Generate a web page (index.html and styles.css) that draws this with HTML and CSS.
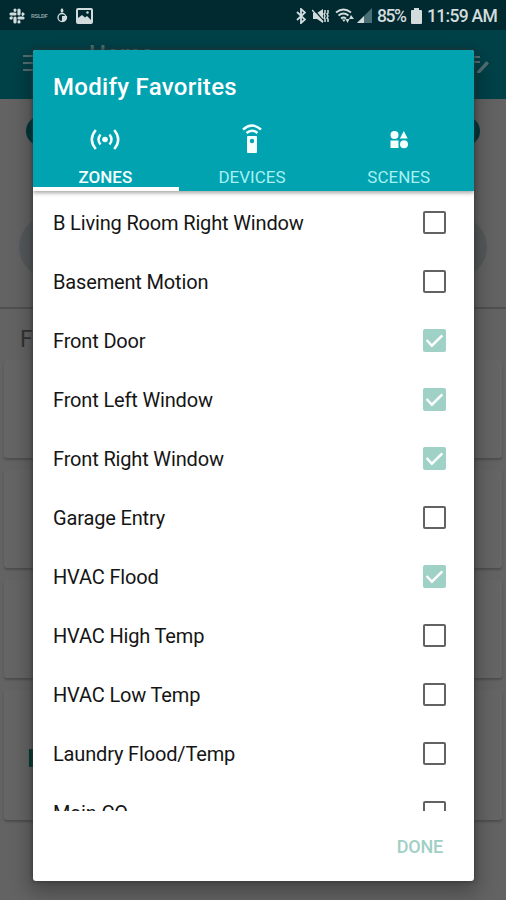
FILE: index.html
```html
<!DOCTYPE html>
<html lang="en">
<head>
<meta charset="utf-8">
<title>Modify Favorites</title>
<link rel="stylesheet" href="styles.css">
</head>
<body>
<div class="screen">
  <header class="status">
    <div class="status-left">
      <svg class="i-slack" viewBox="0 0 16 16"><g stroke="currentColor" stroke-width="3.200" stroke-linecap="round" fill="none"><path d="M6 2v.1M6 6H2M10 2v4M14 6v.1M10 14v-.1M10 10h4M6 14v-4M2 10v.1"/></g><path d="M5 2h2v1.500H5zM13 4.500h1V8h-1zM9 12.500h2V14H9zM2 8.500h1.500V11H2z" fill="currentColor"/></svg>
      <span class="i-word">RSLDF</span>
      <svg class="i-drop" viewBox="0 0 12 15"><path d="M6 0c2 2 2 3.500 0 5C4 3.500 4 2 6 0z" fill="currentColor"/><circle cx="6" cy="9.500" r="4" fill="none" stroke="currentColor" stroke-width="1.300"/><path d="M6 8h5c.5 4-2 6-5 6z" fill="currentColor"/></svg>
      <svg class="i-pic" viewBox="0 0 17 16"><rect x="1" y="1" width="15" height="14" rx="1" fill="none" stroke="currentColor" stroke-width="2"/><path d="M2 14v-4l4-3 3 2.500L11 8l4 4v2z" fill="currentColor"/><circle cx="11.500" cy="4.500" r="1.200" fill="currentColor"/></svg>
    </div>
    <div class="status-right">
      <svg class="i-bt" viewBox="0 0 10 16"><path d="M1 4l8 7.500L5 15V1l4 3.500L1 12" fill="none" stroke="currentColor" stroke-width="1.800"/></svg>
      <svg class="i-mute" viewBox="0 0 17 16"><path d="M1 5h4l6-4v14l-6-4H1z" fill="currentColor"/><path d="M1.500 1l11 13" stroke="#002a30" stroke-width="1.300"/><path d="M0 2l11 12" stroke="currentColor" stroke-width="1.500"/><path d="M13 2v3l-1 1 1 2-1 2 1 1v3M16 2v3l-1 1 1 2-1 2 1 1v3" stroke="currentColor" stroke-width="1.500" fill="none"/></svg>
      <svg class="i-wifi" viewBox="0 0 19 16"><g fill="none" stroke="currentColor" stroke-width="1.800"><path d="M1 4.500Q8.500-1.500 16 4.500M3.500 7.500Q8.500 3.500 13.500 7.500M6 10.500Q8.500 8.500 11 10.500"/></g><path d="M7 11.500h3.500L9 14zM10.500 11l2 4 2-4zM14 11l2-4 3 4z" fill="currentColor"/></svg>
      <svg class="i-signal" viewBox="0 0 15 15"><path d="M15 0v15H0z" fill="#4a7075"/><path d="M7 8v7H0z" fill="currentColor"/></svg>
      <span class="pct">85%</span>
      <svg class="i-batt" viewBox="0 0 11 16"><path d="M3 0h5v2h2q1 0 1 1v12q0 1-1 1H1q-1 0-1-1V3q0-1 1-1h2z" fill="currentColor"/></svg>
      <span class="clock">11:59 AM</span>
    </div>
  </header>
  <div class="appbar">
    <svg class="i-menu" viewBox="0 0 22 16"><path d="M0 1h22M0 8h22M0 15h22" stroke="currentColor" stroke-width="1.800"/></svg>
    <span class="page-title">Home</span>
    <svg class="i-edit" viewBox="0 0 28 20"><path d="M2 2h15M2 7h15M2 12h9" stroke="currentColor" stroke-width="1.800"/><path d="M14 16.500L23.500 6l2.500 2.500L17 18h-3z" fill="currentColor"/></svg>
  </div>
  <section class="hero">
    <div class="pill"></div>
    <div class="discs"><i></i><i></i></div>
  </section>
  <h2 class="section-name">F</h2>
  <div class="card"></div>
  <div class="card"></div>
  <div class="card"></div>
  <div class="card tall"><i class="swatch"></i></div>

  <div class="dialog" role="dialog">
    <div class="head">
      <h1>Modify Favorites</h1>
      <div class="tabs">
        <div class="tab on">
          <svg class="tab-icon" viewBox="0 0 32 30"><circle cx="16" cy="15.500" r="2.800" fill="currentColor"/><g fill="none" stroke="currentColor" stroke-width="2.500"><path d="M11.500 10.500q-4 5 0 10M20.500 10.500q4 5 0 10M6.800 6q-8 9.500 0 19M25.200 6q8 9.500 0 19"/></g></svg>
          <span>ZONES</span>
        </div>
        <div class="tab">
          <svg class="tab-icon" viewBox="0 0 32 30"><path d="M12 12h8q1 0 1 1v15q0 1-1 1h-8q-1 0-1-1V13q0-1 1-1z" fill="currentColor"/><circle cx="16" cy="17" r="2.200" fill="#02a3b0"/><path d="M10.500 9Q16 4.500 21.500 9M7 5.500Q16-2.500 25 5.500" fill="none" stroke="currentColor" stroke-width="2.400"/></svg>
          <span>DEVICES</span>
        </div>
        <div class="tab">
          <svg class="tab-icon" viewBox="0 0 32 30"><g fill="currentColor"><circle cx="11.500" cy="11" r="4"/><path d="M20.800 7l3.900 7.500h-7.800zM7.500 16.500h8v7.500h-8z"/><circle cx="21" cy="20.300" r="4"/></g></svg>
          <span>SCENES</span>
        </div>
      </div>
    </div>
    <ul class="list">
      <li><span>B Living Room Right Window</span><i class="box"></i></li>
      <li><span>Basement Motion</span><i class="box"></i></li>
      <li><span>Front Door</span><i class="box checked"><svg viewBox="0 0 22 22"><path d="M3.500 10.500l5 5.500L18.500 6"/></svg></i></li>
      <li><span>Front Left Window</span><i class="box checked"><svg viewBox="0 0 22 22"><path d="M3.500 10.500l5 5.500L18.500 6"/></svg></i></li>
      <li><span>Front Right Window</span><i class="box checked"><svg viewBox="0 0 22 22"><path d="M3.500 10.500l5 5.500L18.500 6"/></svg></i></li>
      <li><span>Garage Entry</span><i class="box"></i></li>
      <li><span>HVAC Flood</span><i class="box checked"><svg viewBox="0 0 22 22"><path d="M3.500 10.500l5 5.500L18.500 6"/></svg></i></li>
      <li><span>HVAC High Temp</span><i class="box"></i></li>
      <li><span>HVAC Low Temp</span><i class="box"></i></li>
      <li><span>Laundry Flood/Temp</span><i class="box"></i></li>
      <li><span>Main CO</span><i class="box"></i></li>
    </ul>
    <div class="foot"><span class="done">DONE</span></div>
  </div>
</div>
</body>
</html>
```
FILE: styles.css
```css
* { box-sizing: border-box; }
body { margin: 0; font-family: Roboto, sans-serif; }
svg { display: block; flex: none; }
.screen { position: relative; width: 506px; height: 900px; overflow: hidden; background: #636363; }

.status { height: 30px; background: #002a30; color: #d3dcdd; display: flex; justify-content: space-between; padding: 0 10px 0 9px; }
.status-left, .status-right { display: flex; align-items: center; height: 31px; }
.i-slack { width: 16px; height: 16px; }
.i-word { font-size: 6px; font-weight: 700; margin-left: 6px; width: 17px; color: #829ea1; letter-spacing: -0.3px; }
.i-drop { width: 12px; height: 15px; margin-left: 8px; }
.i-pic { width: 17px; height: 16px; margin-left: 8px; }
.i-bt { width: 10px; height: 16px; }
.i-mute { width: 17px; height: 16px; margin-left: 6px; }
.i-wifi { width: 19px; height: 16px; margin-left: 6px; }
.i-signal { width: 15px; height: 15px; margin-left: 3px; }
.pct { font-size: 17.500px; font-weight: 500; width: 30px; margin-left: 5px; letter-spacing: -1.4px; white-space: nowrap; }
.i-batt { width: 11px; height: 16px; margin-left: 4px; }
.clock { font-size: 17.500px; font-weight: 500; width: 69px; margin-left: 5px; letter-spacing: -0.7px; white-space: nowrap; }

.appbar { height: 69px; background: #004148; color: #536f72; display: flex; align-items: center; padding: 0 15px 0 23px; }
.i-menu { width: 22px; height: 16px; margin-top: -4px; }
.page-title { font-size: 24px; font-weight: 500; margin: -21px auto 0 44px; }
.i-edit { width: 28px; height: 20px; }

.hero { height: 210px; padding-top: 17px; background: #636363; border-bottom: 2px solid #505050; }
.pill { height: 30px; margin: 0 26px; border-radius: 15px; background: #00373c; }
.discs { display: flex; justify-content: space-between; margin: 70px 19px 0; }
.discs i { width: 62px; height: 62px; border-radius: 50%; background: #56595b; }
.section-name { margin: 15px 0 0 20px; height: 32px; font-size: 23px; line-height: 32px; font-weight: 400; color: #333; }
.card { height: 98px; margin: 4px 4px 12px; border-radius: 3px; background: #656565; box-shadow: 0 2px 2px #4e4e4e; }
.card + .card { margin-top: 0; }
.card.tall { height: 130px; padding: 59px 0 0 25px; }
.swatch { display: block; width: 18px; height: 18px; background: #003a33; }

.dialog { position: absolute; left: 33px; top: 50px; width: 441px; height: 831px; background: #fff; border-radius: 3px; overflow: hidden; display: flex; flex-direction: column; box-shadow: 0 0 4px #333, 0 8px 20px 4px rgba(0,0,0,.28); }
.head { height: 141px; background: #02a3b0; color: #fff; display: flex; flex-direction: column; box-shadow: 0 2px 4px rgba(0,0,0,.35); position: relative; }
h1 { margin: 0; padding-left: 20px; height: 72px; line-height: 74px; font-size: 24px; font-weight: 500; letter-spacing: 0.3px; }
.tabs { flex: 1; display: flex; margin-right: 2px; margin-left: -1px; }
.tab { flex: 1; display: flex; flex-direction: column; align-items: center; padding-top: 2px; font-size: 17px; color: #a5f1f3; }
.tab.on { color: #f4fffe; font-weight: 500; border-bottom: 4px solid #fff; }
.tab-icon { width: 32px; height: 30px; color: #f4fffe; }
.tab span { line-height: 20px; margin-top: 13px; white-space: nowrap; }

.list { height: 620px; margin: 0; padding: 2px 28px 0 20px; overflow: hidden; list-style: none; font-size: 20px; color: #151515; }
.list li { height: 59px; display: flex; align-items: center; justify-content: space-between; letter-spacing: -0.16px; }
.box { width: 23px; height: 23px; border: 2px solid #626262; border-radius: 2px; flex: none; }
.checked { border: 0; background: #9fd1c7; }
.checked svg { width: 23px; height: 23px; fill: none; stroke: #fff; stroke-width: 2.4; }
.foot { flex: 1; display: flex; justify-content: flex-end; padding: 25px 31px 0 0; }
.done { font-size: 18px; line-height: 22px; font-weight: 500; letter-spacing: -0.2px; color: #9fcfc5; }
```
